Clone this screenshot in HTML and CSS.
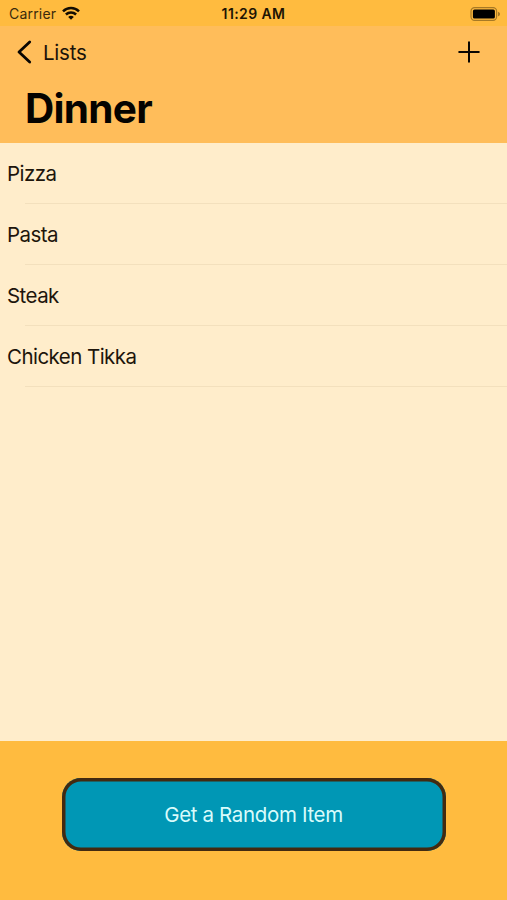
FILE: index.html
```html
<!DOCTYPE html>
<html lang="en">
<head>
<meta charset="utf-8">
<title>Dinner</title>
<link rel="stylesheet" href="styles.css">
</head>
<body>
<div class="app">
  <div class="status">
    <div class="carrier">
      <span>Carrier</span>
      <svg class="wifi" width="18" height="14" viewBox="0 0 18 14" fill="none" stroke="#130d02" stroke-width="2.5">
        <path d="M1 5.3C5.5 .9 12.500 .9 17 5.300"/>
        <path d="M3.900 8.500C6.800 5.700 11.200 5.700 14.100 8.500"/>
        <path d="M9 13.700L6.200 10.900C7.700 9.400 10.300 9.400 11.800 10.900Z" fill="#130d02" stroke="none"/>
      </svg>
    </div>
    <time class="clock">11:29 AM</time>
    <svg class="battery" width="31" height="14" viewBox="0 0 31 14">
      <rect x="1" y=".6" width="25.600" height="12.800" rx="3.600" fill="none" stroke="#a77925" stroke-width="1.200"/>
      <rect x="2.900" y="2.500" width="22" height="9" rx="1.600" fill="#000"/>
      <path d="M28 4.700C30.700 5.500 30.700 8.500 28 9.300Z" fill="#a77925"/>
    </svg>
  </div>
  <header class="header">
    <nav class="nav">
      <a class="back">
        <svg width="15" height="24" viewBox="0 0 15 24" fill="none" stroke="#090602" stroke-width="2.800" stroke-linecap="round" stroke-linejoin="round"><path d="M12.700 2L2 12L12.700 22"/></svg>
        <span class="back-label">Lists</span>
      </a>
      <svg class="add" width="22" height="22" viewBox="0 0 22 22" fill="none" stroke="#090602" stroke-width="2" stroke-linecap="round"><path d="M11 1.200V20.800M1.200 11H20.800"/></svg>
    </nav>
    <h1 class="title">Dinner</h1>
  </header>
  <ul class="list">
    <li class="row"><span>Pizza</span></li>
    <li class="row"><span>Pasta</span></li>
    <li class="row"><span>Steak</span></li>
    <li class="row"><span>Chicken Tikka</span></li>
  </ul>
  <footer class="footer">
    <button class="random">Get a Random Item</button>
  </footer>
</div>
</body>
</html>
```
FILE: styles.css
```css
* { box-sizing: border-box; }
body { margin: 0; font-family: Inter, "Liberation Sans", sans-serif; color: #1d150b; }
.app { height: 900px; display: flex; flex-direction: column; background: #ffedcb; overflow: hidden; }
.status { height: 26px; display: grid; grid-template-columns: 1fr auto 1fr; align-items: center; padding: 1px 6px 0 9px; background: #ffbb3f; font-size: 14px; }
.carrier { display: flex; align-items: center; gap: 6px; color: #3b2a0c; letter-spacing: .2px; }
.wifi { margin-top: -2px; }
.clock { margin-right: 3px; font-weight: 600; font-size: 14px; letter-spacing: .4px; color: #1d1404; }
.battery { justify-self: end; }
.header { height: 117px; background: #ffbd5a; }
.nav { height: 52px; display: flex; align-items: center; justify-content: space-between; padding: 0 27px 0 17px; }
.back { display: flex; align-items: center; gap: 11px; }
.back-label { font-size: 20.500px; letter-spacing: -.25px; color: #1b1309; }
.title { margin: 6px 0 0 25px; font-size: 40.500px; line-height: 50px; font-weight: 700; letter-spacing: -.700px; color: #050300; }
.list { flex: 1; margin: 0; padding: 0; list-style: none; }
.row { height: 61px; display: flex; align-items: center; padding: 0 0 1px 7px; font-size: 20.500px; letter-spacing: -.55px; background: linear-gradient(#f3e0bd, #f3e0bd) 25px 100% / 100% 1px no-repeat; }
.footer { height: 159px; display: flex; justify-content: center; align-items: flex-start; padding-top: 37px; background: #ffbb3f; }
.random { width: 384px; height: 73px; border: 0; border-radius: 19px; box-shadow: inset 0 0 0 3.500px #432a10; background: #0097b5; color: #d9fbfb; font: 400 20.500px Inter, "Liberation Sans", sans-serif; letter-spacing: -.35px; }
```
